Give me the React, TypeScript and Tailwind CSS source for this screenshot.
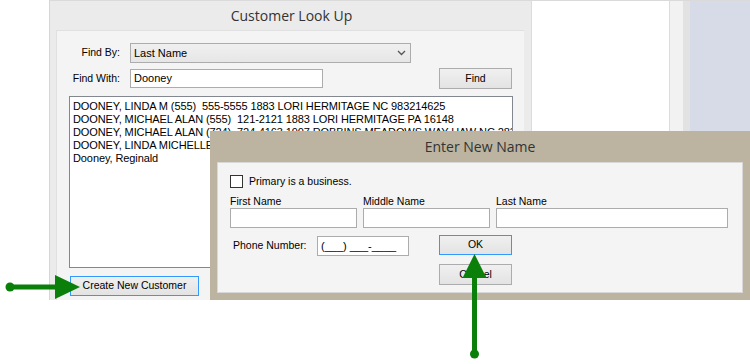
import React from 'react';

const rows = [
  'DOONEY, LINDA M (555)  555-5555 1883 LORI HERMITAGE NC 983214625',
  'DOONEY, MICHAEL ALAN (555)  121-2121 1883 LORI HERMITAGE PA 16148',
  'DOONEY, MICHAEL ALAN (724)  724-4163 1907 ROBBINS MEADOWS WAY HAW NC 28314',
  'DOONEY, LINDA MICHELLE (555)  555-5555 1883 LORI HERMITAGE NC 98321',
  'Dooney, Reginald',
];

const btn =
  'flex items-center justify-center border bg-gradient-to-b from-[#f0f0f0] to-[#e3e3e3] text-[10.5px] text-black whitespace-nowrap';

const Arrows = () => (
  <svg className="absolute left-0 top-0 pointer-events-none" width="750" height="364">
    {/* arrow pointing at Create New Customer */}
    <circle cx="10" cy="287" r="4.5" fill="#0a7f0a" />
    <line x1="10" y1="287" x2="58" y2="287" stroke="#0a7f0a" strokeWidth="5" />
    <polygon points="55,275 80,287 55,299" fill="#0a7f0a" />
    {/* arrow pointing at OK */}
    <circle cx="474.5" cy="354" r="4.5" fill="#0a7f0a" />
    <line x1="474.5" y1="354" x2="474.5" y2="276" stroke="#0a7f0a" strokeWidth="5" />
    <polygon points="462.5,278 486.5,278 474.5,254" fill="#0a7f0a" />
  </svg>
);

const LookUp = () => (
  <div className="flex h-[300px] ml-[49px] border-t border-[#dadada]">
    <div className="flex flex-col w-[482px] bg-[#ebebeb] border-l border-[#d6d6d6]">
      <div className="h-[29px] flex items-center justify-center pl-[2px] font-['Open_Sans',sans-serif] text-[14px] text-[#333]">
        Customer Look Up
      </div>
      <div className="flex-1 ml-[6px] w-[468px] bg-[#f4f4f4] border-t border-l border-[#e0e0e0] pl-[12px] pt-[12px] text-[10.5px]">
        <div className="flex items-center h-[20px]">
          <span className="w-[51px] shrink-0 flex justify-end whitespace-nowrap">Find By:</span>
          <div className="ml-[10px] w-[281px] h-[20px] border border-[#acacac] bg-gradient-to-b from-[#f0f0f0] to-[#e6e6e6] flex items-center pl-[3px] justify-between pr-[4px] text-[11px]">
            <span>Last Name</span>
            <svg width="9" height="6" viewBox="0 0 9 6">
              <path d="M1 1 L4.5 4.5 L8 1" stroke="#555" strokeWidth="1.3" fill="none" />
            </svg>
          </div>
        </div>
        <div className="flex items-center h-[21px] mt-[5px]">
          <span className="w-[51px] shrink-0 flex justify-end whitespace-nowrap">Find With:</span>
          <div className="ml-[10px] w-[193px] h-[19px] border border-[#acacac] bg-white flex items-center pl-[3px] text-[11px]">
            Dooney
          </div>
          <div className={`${btn} ml-[116px] w-[73px] h-[21px] border-[#acacac]`}>Find</div>
        </div>
        <div className="mt-[7px] w-[444px] h-[172px] border border-[#828790] bg-white pl-[3px] pt-[3px] overflow-hidden leading-[13px] text-[11px] tracking-[-0.1px]">
          {rows.map((r) => (
            <div key={r} className="whitespace-pre">
              {r}
            </div>
          ))}
        </div>
        <div className={`${btn} mt-[8px] ml-[1px] w-[129px] h-[20px] border-[#3399ff]`}>Create New Customer</div>
      </div>
    </div>
    <div className="w-[139px] bg-white border border-t-0 border-[#dcdcdc]" />
    <div className="w-[13px] bg-[#f2f2f2]" />
    <div className="w-[7px] bg-[#e2e2e2]" />
    <div className="flex-1 bg-[#d6dbe7]" />
  </div>
);

const Dialog = () => (
  <div className="absolute left-[210px] top-[131px] w-[540px] h-[169px] bg-[#bcb4a0] flex flex-col px-[7px] pb-[7px]">
    <div className="h-[31px] flex items-center justify-center font-['Open_Sans',sans-serif] text-[14px] text-[#333]">
      Enter New Name
    </div>
    <div className="flex-1 bg-[#f4f4f4] border border-[#d8d8d8] pl-[12px] pt-[12px] text-[10.5px]">
      <div className="flex items-center h-[13px]">
        <div className="w-[13px] h-[13px] border border-[#333] bg-white" />
        <span className="ml-[6px]">Primary is a business.</span>
      </div>
      <div className="flex gap-[6px] mt-[7px]">
        {[
          ['First Name', 'w-[127px]'],
          ['Middle Name', 'w-[127px]'],
          ['Last Name', 'w-[232px]'],
        ].map(([l, w]) => (
          <div key={l} className={`flex flex-col ${w}`}>
            <span className="leading-[13px]">{l}</span>
            <div className="h-[20px] border border-[#acacac] bg-white" />
          </div>
        ))}
      </div>
      <div className="flex mt-[7px]">
        <span className="ml-[3px] w-[84px] h-[20px] flex items-center mt-[1px] whitespace-nowrap">Phone Number:</span>
        <div className="mt-[1px] w-[92px] h-[20px] border border-[#acacac] bg-white flex items-center pl-[3px] text-[11px] whitespace-nowrap">
          (___) ___-____
        </div>
        <div className="ml-[30px] flex flex-col gap-[9px]">
          <div className={`${btn} w-[73px] h-[20px] border-[#3399ff]`}>OK</div>
          <div className={`${btn} w-[73px] h-[21px] border-[#acacac]`}>Cancel</div>
        </div>
      </div>
    </div>
  </div>
);

export default function App() {
  return (
    <div className="relative w-[750px] h-[364px] bg-white overflow-hidden font-['Liberation_Sans',Arial,sans-serif] text-black">
      <LookUp />
      <Dialog />
      <Arrows />
    </div>
  );
}
